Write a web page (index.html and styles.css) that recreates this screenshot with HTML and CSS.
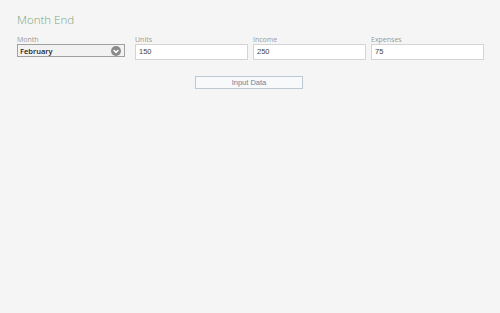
FILE: index.html
```html
<!DOCTYPE html>
<html lang="en">
<head>
  <meta charset="UTF-8">
  <title>Month End</title>
  <link rel="stylesheet" href="styles.css">
</head>
<body>
  <div class="page">
    <h1>Month End</h1>
    <div class="fields">
      <div class="field month">
        <label>Month</label>
        <div class="select">
          <span>February</span>
          <svg width="10" height="10" viewBox="0 0 10 10"><circle cx="5" cy="5" r="5" fill="#8a8a8a"/><path d="M2.6 4 L5 6.4 L7.4 4" stroke="#fff" stroke-width="1.5" fill="none"/></svg>
        </div>
      </div>
      <div class="field">
        <label>Units</label>
        <div class="input">150</div>
      </div>
      <div class="field">
        <label>Income</label>
        <div class="input">250</div>
      </div>
      <div class="field">
        <label>Expenses</label>
        <div class="input">75</div>
      </div>
    </div>
    <div class="actions">
      <button>Input Data</button>
    </div>
  </div>
</body>
</html>
```

FILE: styles.css
```css
* { box-sizing: border-box; }
body { margin: 0; background: #f5f5f5; font-family: "Liberation Sans", Arial, sans-serif; }
.page { padding: 12px 16px 0 17px; }
h1 { margin: 0; font-size: 11.5px; font-weight: 300; color: #7aa67f; font-family: "Open Sans", sans-serif; height: 24px; }
.fields { display: flex; gap: 5px; }
.field { display: flex; flex-direction: column; width: 113px; }
.field.month { width: 108px; margin-right: 5px; }
label { font-size: 7px; color: #9a9a9a; height: 8px; line-height: 8px; font-family: "Open Sans", sans-serif; }
.select { height: 13px; border: 1px solid #a0a0a0; background: #f2f2f2; display: flex; align-items: center; justify-content: space-between; padding: 0 3px 0 2px; font-size: 7.5px; color: #222; font-weight: 600; font-family: "Open Sans", sans-serif; }
.input { height: 16px; border: 1px solid #d4d4d4; background: #fff; font-size: 7.5px; color: #444; line-height: 14px; padding-left: 3px; }
.actions { display: flex; justify-content: center; margin-top: 16px; padding-right: 3px; }
button { width: 108px; height: 13px; border: 1px solid #bcc8d4; background: #f7f9fb; font-size: 7.5px; color: #6a86a0; font-family: "Liberation Sans", Arial, sans-serif; padding: 0; }
```
